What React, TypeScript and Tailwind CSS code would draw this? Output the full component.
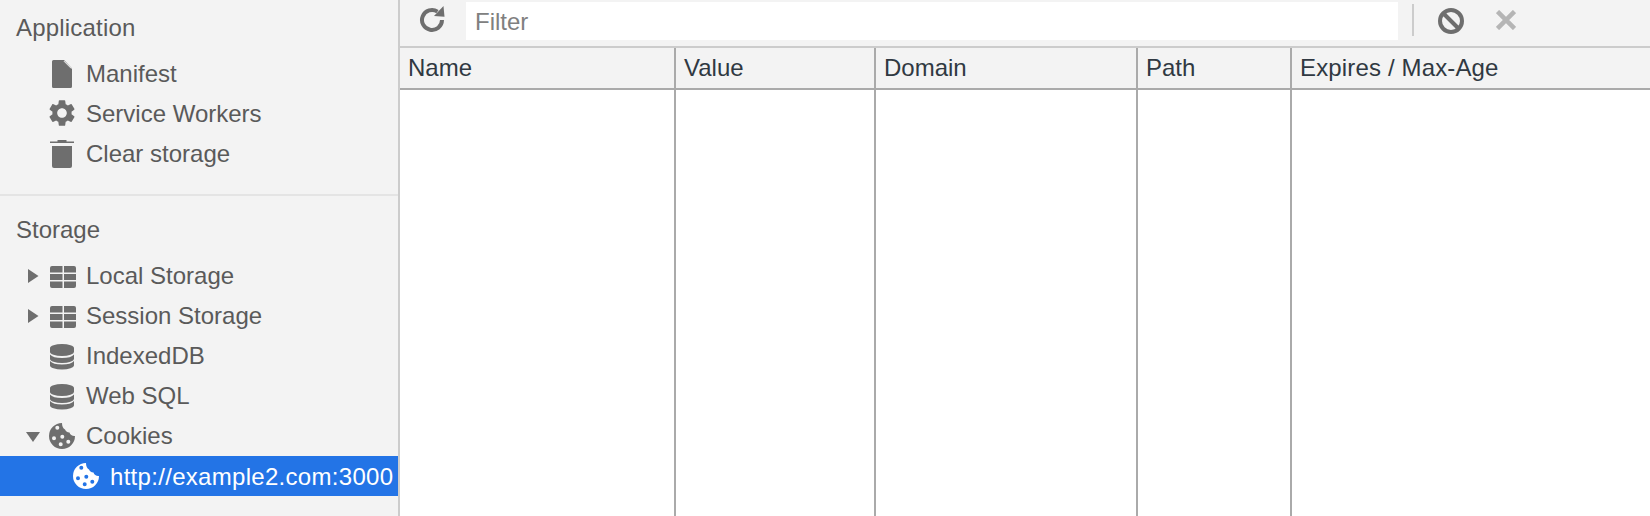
import React from 'react';
import { MdSettings } from 'react-icons/md';

const FileIcon = () => (
  <svg width="32" height="32" viewBox="0 0 32 32" fill="#6e6e6e">
    <path d="M6 4.5A1.5 1.5 0 0 1 7.5 3H18l8 8.5V29.5A1.5 1.5 0 0 1 24.5 31H7.5A1.5 1.5 0 0 1 6 29.5Z" />
    <path d="M18.5 3.5 26 11" stroke="#f3f3f3" strokeWidth="1" transform="translate(-0.6 0.6)" />
  </svg>
);

const TrashIcon = () => (
  <svg width="32" height="32" viewBox="0 0 32 32" fill="#6e6e6e">
    <path d="M4 4.5h7.5V3h9v1.5H28V6H4Z" />
    <path d="M6 9h20v20a2 2 0 0 1-2 2H8a2 2 0 0 1-2-2Z" />
  </svg>
);

const TableIcon = () => (
  <svg width="32" height="32" viewBox="0 0 32 32" fill="#6e6e6e">
    <path d="M4 8a2 2 0 0 1 2-2h10.5v6.5H4Zm14-2h10a2 2 0 0 1 2 2v4.5H18ZM4 14h12.5v6H4Zm14 0h12v6H18ZM4 21.5h12.5V28H6a2 2 0 0 1-2-2Zm14 0h12V26a2 2 0 0 1-2 2H18Z" />
  </svg>
);

const DatabaseIcon = () => (
  <svg width="32" height="32" viewBox="0 0 32 32" fill="#6e6e6e">
    <path d="M4 8a12 4 0 0 1 24 0v4a12 4 0 0 1-24 0Z" />
    <path d="M4 14.5C6 17 10 18 16 18s10-1 12-3.5V19a12 4 0 0 1-24 0Z" />
    <path d="M4 21C6 23.5 10 24.5 16 24.5S26 23.500 28 21v4.500a12 4 0 0 1-24 0Z" />
  </svg>
);

const CookieIcon = ({ color }: { color: string }) => (
  <svg width="26" height="26" viewBox="0 0 26 26" fill={color} fillRule="evenodd">
    <path
      d="M13 0A13 13 0 1 0 26 13C24 13.500 21 12 20.500 9.500 18 9.500 16.500 8 16 6.500 14 5.500 13 3 13 0Z
      M6.300 4.700a2 2 0 1 0 4 0a2 2 0 1 0-4 0Z
      M11.300 13.700a2 2 0 1 0 4 0a2 2 0 1 0-4 0Z
      M3 15.300a2 2 0 1 0 4 0a2 2 0 1 0-4 0Z
      M9.700 21.300a2 2 0 1 0 4 0a2 2 0 1 0-4 0Z
      M17.300 18.700a2 2 0 1 0 4 0a2 2 0 1 0-4 0Z"
    />
  </svg>
);

const RefreshIcon = () => (
  <svg width="28" height="28" viewBox="0 0 28 28" fill="none">
    <path d="M24 16A10 10 0 1 1 19.500 7.600" stroke="#6e6e6e" strokeWidth="4" />
    <path d="M25.500 2 26.500 12.700 16 12Z" fill="#6e6e6e" />
  </svg>
);

const BlockIcon = () => (
  <svg width="26" height="26" viewBox="0 0 26 26" fill="none" stroke="#6e6e6e" strokeWidth="4">
    <circle cx="13" cy="13" r="11" />
    <path d="M5.500 5.500 20.500 20.500" />
  </svg>
);

const CloseIcon = () => (
  <svg width="20" height="20" viewBox="0 0 20 20" fill="none" stroke="#b5b5b5" strokeWidth="4.5">
    <path d="M1.500 1.500 18.500 18.500M18.500 1.500 1.500 18.500" />
  </svg>
);

const ArrowRight = () => (
  <svg width="14" height="14" viewBox="0 0 14 14" fill="#6e6e6e">
    <path d="M2 0 12.500 7 2 14Z" />
  </svg>
);

const ArrowDown = () => (
  <svg width="14" height="14" viewBox="0 0 14 14" fill="#6e6e6e">
    <path d="M0 3H14L7 13Z" />
  </svg>
);

type RowProps = {
  label: string;
  icon: React.ReactNode;
  arrow?: React.ReactNode;
  selected?: boolean;
  lowered?: boolean;
};

const Row = ({ label, icon, arrow, selected, lowered }: RowProps) => (
  <div
    className={
      selected
        ? 'flex h-10 items-center bg-[#2374e6] pl-[70px] tracking-[0.3px] text-white'
        : 'flex h-10 items-center pl-[26px] text-[#5a5a5a]'
    }
  >
    {!selected && <span className="mr-[6px] flex w-[14px] justify-center">{arrow}</span>}
    <span className="mr-2 flex w-8 items-center justify-center">{icon}</span>
    <span className={lowered ? 'whitespace-nowrap pt-[2px]' : 'whitespace-nowrap'}>{label}</span>
  </div>
);

const Sidebar = () => (
  <aside className="flex w-[400px] shrink-0 flex-col border-r-2 border-[#cccccc] bg-[#f3f3f3] text-[24px]">
    <section className="border-b-2 border-[#e4e4e4] pt-[7px] pb-[21px]">
      <h2 className="mb-[6px] flex h-10 items-center pt-[2px] pl-4 tracking-[0.2px] text-[#5a5a5a]">Application</h2>
      <Row lowered label="Manifest" icon={<FileIcon />} />
      <Row lowered label="Service Workers" icon={<MdSettings size={36} color="#6e6e6e" />} />
      <Row lowered label="Clear storage" icon={<TrashIcon />} />
    </section>
    <section className="pt-[14px]">
      <h2 className="mb-[6px] flex h-10 items-center pl-4 text-[#5a5a5a]">Storage</h2>
      <Row label="Local Storage" arrow={<ArrowRight />} icon={<TableIcon />} />
      <Row label="Session Storage" arrow={<ArrowRight />} icon={<TableIcon />} />
      <Row label="IndexedDB" icon={<DatabaseIcon />} />
      <Row label="Web SQL" icon={<DatabaseIcon />} />
      <Row label="Cookies" arrow={<ArrowDown />} icon={<CookieIcon color="#6e6e6e" />} />
      <Row selected lowered label="http://example2.com:3000" icon={<CookieIcon color="#ffffff" />} />
    </section>
  </aside>
);

const columns = [
  { name: 'Name', width: 'w-[276px] border-r-2' },
  { name: 'Value', width: 'w-[200px] border-r-2' },
  { name: 'Domain', width: 'w-[262px] border-r-2' },
  { name: 'Path', width: 'w-[154px] border-r-2' },
  { name: 'Expires / Max-Age', width: 'flex-1 tracking-[0.15px]' },
];

const Toolbar = () => (
  <div className="flex h-12 shrink-0 items-start border-b-2 border-[#cccccc] bg-[#f3f3f3]">
    <button className="mt-1 ml-[18px] flex h-7 w-7 items-center justify-center">
      <RefreshIcon />
    </button>
    <div className="mt-[2px] ml-5 flex h-[38px] w-[932px] items-center bg-white pt-[2px] pl-[9px] text-[#808080]">Filter</div>
    <div className="mt-1 ml-[14px] h-8 w-[2px] bg-[#cccccc]" />
    <button className="mt-2 ml-[24px] flex h-[26px] w-[26px] items-center justify-center">
      <BlockIcon />
    </button>
    <button className="mt-[10px] ml-8 flex h-5 w-5 items-center justify-center">
      <CloseIcon />
    </button>
  </div>
);

export default function App() {
  return (
    <div className="flex h-[516px] w-[1650px] overflow-hidden bg-white font-['Liberation_Sans',Arial,sans-serif] text-[24px]">
      <Sidebar />
      <main className="flex min-w-0 flex-1 flex-col">
        <Toolbar />
        <div className="flex h-[42px] shrink-0 border-b-2 border-[#aaaaaa] bg-[#f3f3f3] text-[#303942]">
          {columns.map((col) => (
            <div key={col.name} className={`flex items-center border-[#aaaaaa] pl-2 ${col.width}`}>
              {col.name}
            </div>
          ))}
        </div>
        <div className="flex flex-1">
          {columns.map((col) => (
            <div key={col.name} className={`border-[#aaaaaa] ${col.width}`} />
          ))}
        </div>
      </main>
    </div>
  );
}
